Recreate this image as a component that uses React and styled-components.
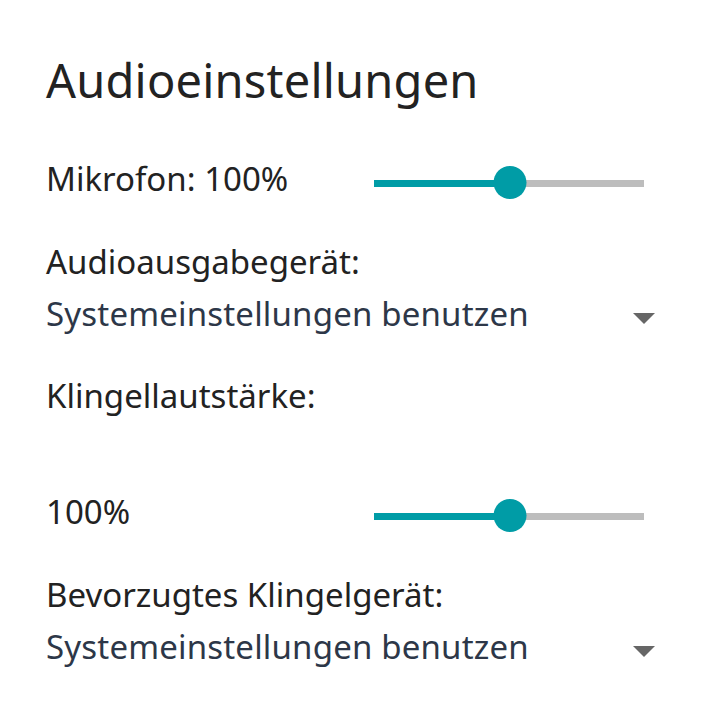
import React from "react";
import styled, { createGlobalStyle } from "styled-components";

const Global = createGlobalStyle`
  html, body { margin: 0; padding: 0; background: #fff; }
  body { font-family: "Noto Sans", "Open Sans", sans-serif; color: #222; }
`;

const Page = styled.div`
  padding: 50px 54px 0 46px;
  display: flex;
  flex-direction: column;
`;

const Title = styled.h1`
  margin: 0;
  font-size: 47px;
  font-weight: 400;
  line-height: 60px;
  letter-spacing: 0.2px;
  color: #222;
`;

const Row = styled.div`
  display: flex;
  align-items: center;
  justify-content: space-between;
  height: 40px;
  margin-top: ${(p) => p.$mt || 0}px;
`;

const Label = styled.div`
  font-size: 33px;
  line-height: 40px;
  color: #222;
`;

const Block = styled.div`
  margin-top: ${(p) => p.$mt || 0}px;
`;

const SliderWrap = styled.div`
  position: relative;
  width: 270px;
  height: 34px;
  margin: 8px 11px 0 0;
  display: flex;
  align-items: center;
`;

const Track = styled.div`
  width: 100%;
  height: 7px;
  background: #bdbdbd;
  display: flex;
`;

const Fill = styled.div`
  height: 100%;
  background: #009ca6;
`;

const Thumb = styled.div`
  position: absolute;
  top: 0;
  width: 33px;
  height: 33px;
  border-radius: 50%;
  background: #009ca6;
  transform: translateX(-50%);
`;

const Select = styled.div`
  display: flex;
  align-items: center;
  justify-content: space-between;
  height: 40px;
  margin-top: 12px;
`;

const SelectText = styled.div`
  font-size: 33px;
  line-height: 40px;
  letter-spacing: 0.18px;
  color: #2d3748;
`;

const Caret = styled.div`
  width: 0;
  height: 0;
  margin-top: 8px;
  border-left: 11px solid transparent;
  border-right: 11px solid transparent;
  border-top: 11px solid #666;
`;

function Slider({ value }) {
  return (
    <SliderWrap>
      <Track>
        <Fill style={{ width: `${value}%` }} />
      </Track>
      <Thumb style={{ left: `${value}%` }} />
    </SliderWrap>
  );
}

export default function App() {
  return (
    <>
      <Global />
      <Page>
        <Title>Audioeinstellungen</Title>
        <Row $mt={49}>
          <Label>Mikrofon: 100%</Label>
          <Slider value={50.5} />
        </Row>
        <Block $mt={43}>
          <Label>Audioausgabegerät:</Label>
          <Select>
            <SelectText>Systemeinstellungen benutzen</SelectText>
            <Caret />
          </Select>
        </Block>
        <Block $mt={42}>
          <Label>Klingellautstärke:</Label>
        </Block>
        <Row $mt={76}>
          <Label>100%</Label>
          <Slider value={50.5} />
        </Row>
        <Block $mt={43}>
          <Label>Bevorzugtes Klingelgerät:</Label>
          <Select>
            <SelectText>Systemeinstellungen benutzen</SelectText>
            <Caret />
          </Select>
        </Block>
      </Page>
    </>
  );
}
